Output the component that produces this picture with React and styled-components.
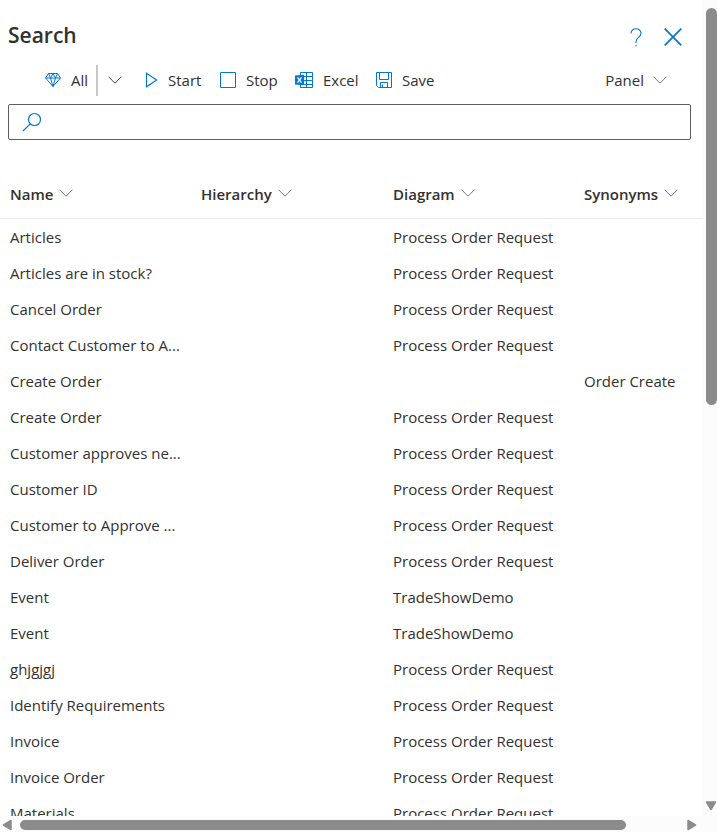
import React from "react";
import styled, { createGlobalStyle } from "styled-components";

const GlobalStyle = createGlobalStyle`
  *, *::before, *::after { box-sizing: border-box; }
  body {
    margin: 0;
    background: #fff;
    color: #323130;
    font-family: "Open Sans", "Noto Sans", sans-serif;
    font-size: 15px;
  }
  button, input { font: inherit; color: inherit; }
`;

const Window = styled.div`
  display: grid;
  grid-template-columns: minmax(0, 1fr) 15px;
  grid-template-rows: minmax(0, 1fr) 16px;
  height: 100vh;
  overflow: hidden;
`;

const Viewport = styled.main`
  overflow: hidden;
`;

const Header = styled.header`
  display: flex;
  align-items: center;
  justify-content: space-between;
  height: 56px;
  padding: 14px 17px 0 8px;
`;

const Title = styled.h1`
  margin: 0;
  font-size: 21px;
  line-height: 28px;
  font-weight: 600;
`;

const HeaderActions = styled.div`
  display: flex;
  gap: 13px;
  padding-top: 4px;
`;

const IconButton = styled.button`
  display: flex;
  align-items: center;
  justify-content: center;
  width: 24px;
  height: 24px;
  padding: 0;
  border: 0;
  background: none;
  color: #0078d4;
`;

const Toolbar = styled.div`
  display: flex;
  align-items: center;
  height: 48px;
  padding: 0 35px 0 44px;
`;

const Command = styled.button`
  display: flex;
  align-items: center;
  gap: ${(p) => p.$gap || 9}px;
  width: ${(p) => (p.$width ? `${p.$width}px` : "auto")};
  height: 32px;
  margin-left: ${(p) => (p.$end ? "auto" : "0")};
  padding: 0;
  border: 0;
  background: none;
  white-space: nowrap;
  svg { flex: none; color: #797775; }
`;

const Divider = styled.span`
  width: 2px;
  height: 31px;
  background: #c8c6c4;
`;

const MenuButton = styled(IconButton)`
  width: 46px;
  padding-right: 12px;
  color: #484644;
`;

const SearchBox = styled.label`
  display: flex;
  align-items: center;
  height: 36px;
  margin: 0 11px 0 8px;
  padding-left: 13px;
  gap: 8px;
  border: 1px solid #605e5c;
  border-radius: 2px;
  color: #0078d4;
`;

const SearchInput = styled.input`
  flex: 1;
  min-width: 0;
  height: 100%;
  padding: 0;
  border: 0;
  outline: 0;
  background: none;
  color: #323130;
`;

const Results = styled.table`
  width: 100%;
  min-width: 768px;
  margin-top: 30px;
  border-collapse: separate;
  border-spacing: 0;
  table-layout: fixed;
`;

const Column = styled.col`
  width: ${(p) => (p.$width ? `${p.$width}px` : "auto")};
`;

const HeadCell = styled.th`
  height: 49px;
  padding: 0 0 0 10px;
  border-bottom: 1px solid #edebe9;
  text-align: left;
  font-weight: 600;
`;

const SortButton = styled.button`
  display: flex;
  align-items: center;
  gap: 6px;
  padding: 0;
  border: 0;
  background: none;
  color: #323130;
  svg { color: #797775; margin-bottom: 2px; }
`;

const Cell = styled.td`
  height: 36px;
  padding: 0 0 0 10px;
  white-space: nowrap;
`;

const VerticalBar = styled.div`
  display: flex;
  flex-direction: column;
  align-items: flex-end;
  padding: 8px 0 5px;
  background: #fcfcfc;
  color: #8b8b8b;
`;

const HorizontalBar = styled.div`
  display: flex;
  align-items: center;
  gap: 8px;
  padding: 2px 5px 0 2px;
  background: #fcfcfc;
  color: #8b8b8b;
`;

const Track = styled.div`
  flex: 1;
  align-self: stretch;
  display: flex;
  flex-direction: ${(p) => (p.$vertical ? "column" : "row")};
  align-items: ${(p) => (p.$vertical ? "flex-end" : "center")};
`;

const Thumb = styled.div`
  width: ${(p) => (p.$vertical ? "11px" : "92%")};
  height: ${(p) => (p.$vertical ? "50%" : "10px")};
  border-radius: 6px;
  background: #8b8b8b;
`;

const Corner = styled.div`
  background: #fcfcfc;
`;

const Chevron = () => (
  <svg width="14" height="8" viewBox="0 0 14 8" fill="none" stroke="currentColor" aria-hidden="true">
    <path d="M.5.7 7 7.2 13.5.7" />
  </svg>
);

const DiamondIcon = () => (
  <svg width="18" height="16" viewBox="0 0 18 16" fill="none" stroke="#0078d4" strokeLinejoin="round" aria-hidden="true">
    <path d="M4.5 1.5h9L16.5 6 9 14.5 1.5 6zM1.5 6h15M4.5 1.5l2 4.5L9 14.5 11.5 6l2-4.5M6.5 6 9 1.5 11.5 6" />
  </svg>
);

const PlayIcon = () => (
  <svg width="14" height="16" viewBox="0 0 14 16" fill="none" stroke="#0078d4" strokeWidth="1.2" aria-hidden="true">
    <path d="M2.5 1.2 12.6 8 2.5 14.8z" />
  </svg>
);

const StopIcon = () => (
  <svg width="16" height="16" viewBox="0 0 16 16" fill="none" stroke="#0078d4" aria-hidden="true">
    <path d="M.5.5h15v15H.5z" />
  </svg>
);

const ExcelIcon = () => (
  <svg width="19" height="16" viewBox="0 0 19 16" fill="none" stroke="#0078d4" aria-hidden="true">
    <path d="M5.5 3V.5h12v15h-12V13M9 4.5h8.5M9 8.5h8.5M9 12.5h8.5M11.5.5v15" />
    <path d="M0 3.5 9 2.8v10.4L0 12.5z" fill="#0078d4" stroke="none" />
    <path d="m2.5 5.3 4 5.4m0-5.4-4 5.4" stroke="#fff" strokeWidth="1.4" />
  </svg>
);

const SaveIcon = () => (
  <svg width="16" height="16" viewBox="0 0 16 16" fill="none" stroke="#0078d4" aria-hidden="true">
    <path d="M.5.5h15v15h-13l-2-2zM3.5.5v7h9v-7M4.5 15.5v-5h7v5M6.5 15.5v-3" />
  </svg>
);

const SearchIcon = () => (
  <svg width="20" height="20" viewBox="0 0 20 20" fill="none" stroke="currentColor" strokeWidth="1.2" aria-hidden="true">
    <circle cx="12.5" cy="7.5" r="6" />
    <path d="M8.2 11.8 1 19" />
  </svg>
);

const HelpIcon = () => (
  <svg width="12" height="19" viewBox="0 0 12 19" fill="none" stroke="currentColor" strokeWidth="1.1" aria-hidden="true">
    <path d="M1 5.5C1 2.5 3.2.8 6 .8s5 1.8 5 4.5c0 4-5 4.2-5 8.2V15" />
    <path d="M6 17v1.3" strokeWidth="1.3" />
  </svg>
);

const CloseIcon = () => (
  <svg width="18" height="18" viewBox="0 0 18 18" fill="none" stroke="currentColor" strokeWidth="1.7" aria-hidden="true">
    <path d="m.7.7 16.6 16.6M17.3.7.7 17.3" />
  </svg>
);

const arrows = {
  left: { w: 10, h: 12, d: "M9 1.5v9L1.5 6z" },
  right: { w: 10, h: 12, d: "M1 1.5v9L8.5 6z" },
  down: { w: 12, h: 10, d: "M1.5 1h9L6 8.5z" },
};

const Arrow = ({ direction }) => {
  const { w, h, d } = arrows[direction];
  return (
    <svg width={w} height={h} viewBox={`0 0 ${w} ${h}`} fill="currentColor" stroke="currentColor" strokeWidth="1.5" strokeLinejoin="round" aria-hidden="true">
      <path d={d} />
    </svg>
  );
};

const columns = ["Name", "Hierarchy", "Diagram", "Synonyms"];
const order = "Process Order Request";
const demo = "TradeShowDemo";
const rows = [
  ["Articles", "", order, ""],
  ["Articles are in stock?", "", order, ""],
  ["Cancel Order", "", order, ""],
  ["Contact Customer to A...", "", order, ""],
  ["Create Order", "", "", "Order Create"],
  ["Create Order", "", order, ""],
  ["Customer approves ne...", "", order, ""],
  ["Customer ID", "", order, ""],
  ["Customer to Approve ...", "", order, ""],
  ["Deliver Order", "", order, ""],
  ["Event", "", demo, ""],
  ["Event", "", demo, ""],
  ["ghjgjgj", "", order, ""],
  ["Identify Requirements", "", order, ""],
  ["Invoice", "", order, ""],
  ["Invoice Order", "", order, ""],
  ["Materials", "", order, ""],
];

export default function App() {
  return (
    <>
      <GlobalStyle />
      <Window>
        <Viewport>
          <Header>
            <Title>Search</Title>
            <HeaderActions>
              <IconButton aria-label="Help"><HelpIcon /></IconButton>
              <IconButton aria-label="Close"><CloseIcon /></IconButton>
            </HeaderActions>
          </Header>
          <Toolbar>
            <Command $width={52}><DiamondIcon />All</Command>
            <Divider />
            <MenuButton aria-label="More options"><Chevron /></MenuButton>
            <Command $gap={10} $width={76}><PlayIcon />Start</Command>
            <Command $gap={10} $width={75}><StopIcon />Stop</Command>
            <Command $gap={9} $width={81}><ExcelIcon />Excel</Command>
            <Command $gap={10}><SaveIcon />Save</Command>
            <Command $end>Panel<Chevron /></Command>
          </Toolbar>
          <SearchBox>
            <SearchIcon />
            <SearchInput type="text" aria-label="Search" />
          </SearchBox>
          <Results>
            <colgroup>
              <Column $width={191} />
              <Column $width={192} />
              <Column $width={191} />
              <Column />
            </colgroup>
            <thead>
              <tr>
                {columns.map((name) => (
                  <HeadCell key={name} scope="col">
                    <SortButton>{name}<Chevron /></SortButton>
                  </HeadCell>
                ))}
              </tr>
            </thead>
            <tbody>
              {rows.map((row, index) => (
                <tr key={index}>
                  {row.map((value, column) => (
                    <Cell key={columns[column]}>{value}</Cell>
                  ))}
                </tr>
              ))}
            </tbody>
          </Results>
        </Viewport>
        <VerticalBar>
          <Track $vertical><Thumb $vertical /></Track>
          <Arrow direction="down" />
        </VerticalBar>
        <HorizontalBar>
          <Arrow direction="left" />
          <Track><Thumb /></Track>
          <Arrow direction="right" />
        </HorizontalBar>
        <Corner />
      </Window>
    </>
  );
}
